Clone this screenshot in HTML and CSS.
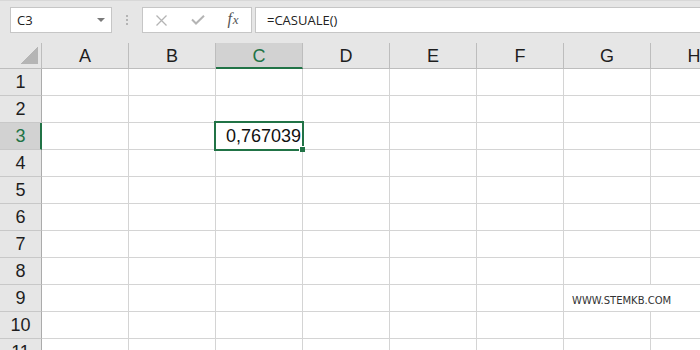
FILE: index.html
```html
<!DOCTYPE html>
<html>
  <head>
    <meta charset="UTF-8" />
    <title>CASUALE</title>
    <link rel="stylesheet" href="styles.css">
  </head>
  <body>
    <!-- Formula bar -->
    <div class="toolbar">
      <div class="name-box">
        <span>C3</span>
        <span class="arrow"></span>
      </div>
      <div class="grip"><i></i><i></i><i></i></div>
      <div class="fx-box">
        <span class="slot cancel">
          <svg width="11" height="11" viewBox="0 0 11 11"><path d="M0.5 0.5 L10.5 10.5 M10.5 0.5 L0.5 10.5" stroke="#b4b4b4" stroke-width="1.3" fill="none"/></svg>
        </span>
        <span class="slot enter">
          <svg width="14" height="10" viewBox="0 0 14 10"><path d="M1 4.5 L5 8.5 L13 0.8" stroke="#b4b4b4" stroke-width="2" fill="none"/></svg>
        </span>
        <span class="slot fx"><i>f</i><i class="x">x</i></span>
      </div>
      <div class="formula">=CASUALE()</div>
    </div>

    <!-- Worksheet -->
    <div class="sheet">
      <div class="corner"><span class="tri"></span></div>
      <div class="col-head">A</div>
      <div class="col-head">B</div>
      <div class="col-head active">C</div>
      <div class="col-head">D</div>
      <div class="col-head">E</div>
      <div class="col-head">F</div>
      <div class="col-head">G</div>
      <div class="col-head">H</div>

      <div class="row-head">1</div>
      <div class="cell"></div><div class="cell"></div><div class="cell"></div><div class="cell"></div><div class="cell"></div><div class="cell"></div><div class="cell"></div><div class="cell"></div>

      <div class="row-head">2</div>
      <div class="cell"></div><div class="cell"></div><div class="cell"></div><div class="cell"></div><div class="cell"></div><div class="cell"></div><div class="cell"></div><div class="cell"></div>

      <div class="row-head active">3</div>
      <div class="cell"></div><div class="cell"></div>
      <div class="cell number selected">0,767039<span class="sel-box"><span class="handle"></span></span></div>
      <div class="cell"></div><div class="cell"></div><div class="cell"></div><div class="cell"></div><div class="cell"></div>

      <div class="row-head">4</div>
      <div class="cell"></div><div class="cell"></div><div class="cell"></div><div class="cell"></div><div class="cell"></div><div class="cell"></div><div class="cell"></div><div class="cell"></div>

      <div class="row-head">5</div>
      <div class="cell"></div><div class="cell"></div><div class="cell"></div><div class="cell"></div><div class="cell"></div><div class="cell"></div><div class="cell"></div><div class="cell"></div>

      <div class="row-head">6</div>
      <div class="cell"></div><div class="cell"></div><div class="cell"></div><div class="cell"></div><div class="cell"></div><div class="cell"></div><div class="cell"></div><div class="cell"></div>

      <div class="row-head">7</div>
      <div class="cell"></div><div class="cell"></div><div class="cell"></div><div class="cell"></div><div class="cell"></div><div class="cell"></div><div class="cell"></div><div class="cell"></div>

      <div class="row-head">8</div>
      <div class="cell"></div><div class="cell"></div><div class="cell"></div><div class="cell"></div><div class="cell"></div><div class="cell"></div><div class="cell"></div><div class="cell"></div>

      <div class="row-head">9</div>
      <div class="cell"></div><div class="cell"></div><div class="cell"></div><div class="cell"></div><div class="cell"></div><div class="cell"></div><div class="cell"></div><div class="cell"></div>

      <div class="row-head">10</div>
      <div class="cell"></div><div class="cell"></div><div class="cell"></div><div class="cell"></div><div class="cell"></div><div class="cell"></div><div class="cell"></div><div class="cell"></div>

      <div class="row-head">11</div>
      <div class="cell"></div><div class="cell"></div><div class="cell"></div><div class="cell"></div><div class="cell"></div><div class="cell"></div><div class="cell"></div><div class="cell"></div>

      <!-- watermark floats over the grid -->
      <div class="watermark">WWW.STEMKB.COM</div>
    </div>
  </body>
</html>
```

FILE: styles.css
```css
html, body {
  margin: 0;
  height: 350px;
  overflow: hidden;
}
body {
  background: #fff;
  font-family: "Liberation Sans", Arial, sans-serif;
  color: #1e1e1e;
}

/* Formula bar */
.toolbar {
  height: 43px;
  box-sizing: border-box;
  background: #e6e6e6;
  border-top: 1px solid #d8d8d8;
  padding: 6px 0 0 10px;
  display: flex;
  align-items: flex-start;
}
.name-box {
  width: 102px;
  height: 26px;
  box-sizing: border-box;
  background: #fff;
  border: 1px solid #c6c6c6;
  display: flex;
  align-items: center;
  justify-content: space-between;
  padding: 0 6px 0 6px;
  font-family: "Open Sans", sans-serif;
  font-size: 13px;
  color: #222;
}
.name-box .arrow {
  width: 0;
  height: 0;
  border-left: 4px solid transparent;
  border-right: 4px solid transparent;
  border-top: 4px solid #7a7a7a;
}
.grip {
  width: 30px;
  height: 26px;
  display: flex;
  flex-direction: column;
  align-items: center;
  justify-content: center;
  gap: 2px;
}
.grip i {
  width: 2px;
  height: 2px;
  background: #b4b4b4;
}
.fx-box {
  width: 110px;
  height: 26px;
  box-sizing: border-box;
  background: #fff;
  border: 1px solid #c6c6c6;
  display: flex;
  align-items: center;
  margin-right: 3px;
}
.slot {
  display: flex;
  align-items: center;
  justify-content: center;
  height: 100%;
}
.cancel { width: 37px; }
.enter { width: 35px; }
.fx {
  flex: 1;
  font-family: "Liberation Serif", serif;
  font-size: 16px;
  color: #555;
  padding-bottom: 2px;
  box-sizing: border-box;
}
.fx .x {
  font-size: 13px;
  margin-left: 1px;
  position: relative;
  top: 1px;
}
.formula {
  flex: 1;
  height: 26px;
  box-sizing: border-box;
  background: #fff;
  border: 1px solid #c6c6c6;
  border-right: none;
  padding-left: 11px;
  display: flex;
  align-items: center;
  font-family: "Open Sans", sans-serif;
  font-size: 13px;
  color: #222;
}

/* Worksheet grid */
.sheet {
  position: relative;
  display: grid;
  grid-template-columns: 42px repeat(8, 87px);
  grid-template-rows: 26px;
  grid-auto-rows: 27px;
  font-size: 18px;
}
.corner {
  background: #e6e6e6;
  border-right: 1px solid #bdbdbd;
  border-bottom: 1px solid #bdbdbd;
  display: flex;
  justify-content: flex-end;
  align-items: flex-end;
  padding: 0 3px 4px 0;
}
.corner .tri {
  width: 18px;
  height: 18px;
  background: linear-gradient(to bottom right, transparent 50%, #b5b5b5 50%);
}
.col-head {
  background: #e6e6e6;
  border-right: 1px solid #bdbdbd;
  border-bottom: 1px solid #bdbdbd;
  display: flex;
  align-items: center;
  justify-content: center;
  padding-top: 2px;
}
.col-head.active {
  background: #d2d2d2;
  color: #217346;
  border-bottom: 2px solid #217346;
  padding-top: 3px;
}
.row-head {
  background: #e6e6e6;
  border-right: 1px solid #ababab;
  border-bottom: 1px solid #c8c8c8;
  display: flex;
  align-items: center;
  justify-content: center;
}
.row-head.active {
  background: #d2d2d2;
  color: #217346;
  border-right: 2px solid #217346;
  padding-left: 1px;
}
.cell {
  border-right: 1px solid #d4d4d4;
  border-bottom: 1px solid #d4d4d4;
}
.cell.number {
  display: flex;
  align-items: center;
  justify-content: flex-end;
  padding-right: 1px;
  padding-top: 1px;
  color: #111;
}
.cell.selected {
  position: relative;
}
.sel-box {
  position: absolute;
  left: -2px;
  top: -2px;
  width: 90px;
  height: 30px;
  box-sizing: border-box;
  border: 2px solid #217346;
}
.handle {
  position: absolute;
  right: -3px;
  bottom: -3px;
  width: 5px;
  height: 5px;
  background: #217346;
  border-top: 1px solid #fff;
  border-left: 1px solid #fff;
}
.watermark {
  position: absolute;
  left: 566px;
  top: 242px;
  width: 126px;
  height: 26px;
  background: #fff;
  box-sizing: border-box;
  padding: 10px 0 0 6px;
  font-family: "DejaVu Sans", Verdana, sans-serif;
  font-size: 10px;
  line-height: 12px;
  color: #333;
}
```
